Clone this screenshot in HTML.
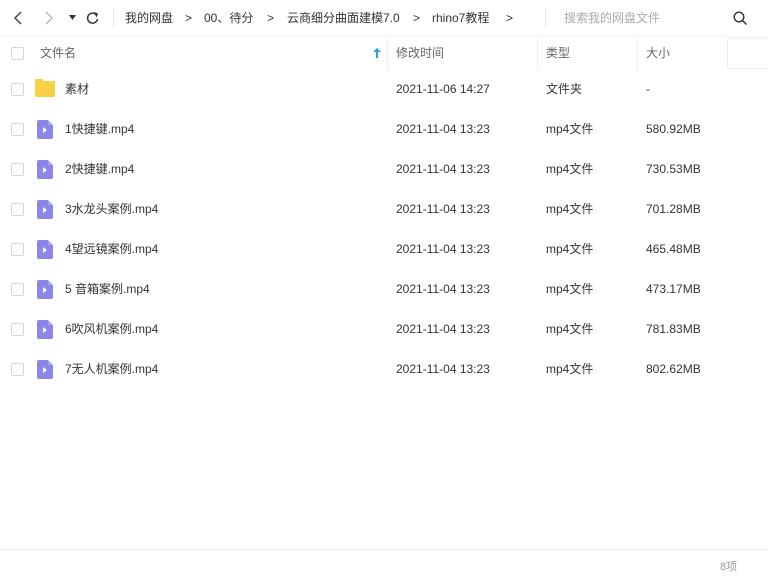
<!DOCTYPE html>
<html><head><meta charset="utf-8"><style>
*{margin:0;padding:0;box-sizing:border-box}
body{width:768px;height:583px;background:#fff;font-family:"Liberation Sans","Noto Sans CJK SC",sans-serif;font-size:12px;color:#333;position:relative;overflow:hidden}
.a{position:absolute;white-space:nowrap;line-height:16px}
.cb{position:absolute;left:11px;width:13px;height:13px;border:1px solid #d6d6d6;border-radius:2px;background:#fff}
.sep{position:absolute;top:38px;height:32px;width:1px;background:#eee}
.vid{position:absolute;left:37px;width:16px;height:19px;background:#8b86e8;border-radius:2px}
.vid:after{content:"";position:absolute;left:6px;top:7px;border-left:4px solid #fff;border-top:3px solid transparent;border-bottom:3px solid transparent}
.vid:before{content:"";position:absolute;right:0;top:0;border-top:5px solid #fff;border-left:5px solid #aaa6f0}
</style></head><body>
<svg class="a" style="left:12px;top:10px" width="14" height="16"><path d="M9 2 L3 8 L9 14" stroke="#444" stroke-width="1.5" fill="none"/></svg>
<svg class="a" style="left:42px;top:10px" width="14" height="16"><path d="M4 2 L10 8 L4 14" stroke="#bbb" stroke-width="1.5" fill="none"/></svg>
<svg class="a" style="left:69px;top:15px" width="8" height="6"><path d="M0 0 L7 0 L3.5 5Z" fill="#333"/></svg>
<svg class="a" style="left:86px;top:10px" width="14" height="16"><path d="M11.5 9 A5 5 0 1 1 10 4.5" stroke="#333" stroke-width="1.5" fill="none"/><path d="M8 2 L12 3.5 L10.5 7.5Z" fill="#333"/></svg>
<div class="a" style="left:113px;top:9px;width:1px;height:18px;background:#e5e5e5"></div>
<div class="a" style="left:125px;top:10px">我的网盘</div>
<div class="a" style="left:185px;top:10px">&gt;</div>
<div class="a" style="left:204px;top:10px">00、待分</div>
<div class="a" style="left:267px;top:10px">&gt;</div>
<div class="a" style="left:287px;top:10px">云商细分曲面建模7.0</div>
<div class="a" style="left:413px;top:10px">&gt;</div>
<div class="a" style="left:432px;top:10px">rhino7教程</div>
<div class="a" style="left:506px;top:10px">&gt;</div>
<div class="a" style="left:545px;top:9px;width:1px;height:18px;background:#e5e5e5"></div>
<div class="a" style="left:564px;top:10px;color:#aaa">搜索我的网盘文件</div>
<svg class="a" style="left:733px;top:11px" width="15" height="15"><circle cx="6" cy="6" r="4.8" stroke="#333" stroke-width="1.4" fill="none"/><path d="M9.5 9.5 L13.5 13.5" stroke="#333" stroke-width="1.5"/></svg>
<div class="a" style="left:0;top:36px;width:768px;height:1px;background:#f3f3f3"></div>
<div class="cb" style="top:47px"></div>
<div class="a" style="left:40px;top:45px;color:#666">文件名</div>
<svg class="a" style="left:372px;top:47px" width="10" height="12"><path d="M5 1 L1 5 H4 V11 H6 V5 H9Z" fill="#2ea0d6"/></svg>
<div class="sep" style="left:387px"></div>
<div class="a" style="left:396px;top:45px;color:#666">修改时间</div>
<div class="sep" style="left:537px"></div>
<div class="a" style="left:546px;top:45px;color:#666">类型</div>
<div class="sep" style="left:637px"></div>
<div class="a" style="left:646px;top:45px;color:#666">大小</div>
<div class="a" style="left:727px;top:38px;width:41px;height:31px;border:1px solid #eee;border-right:none"></div>

<div class="cb" style="top:83px"></div>
<div class="a" style="left:35px;top:81px;width:20px;height:16px;background:#f7d144;border-radius:1px"></div>
<div class="a" style="left:35px;top:79px;width:8px;height:4px;background:#f7d144"></div>
<div class="a" style="left:65px;top:81px">素材</div>
<div class="a" style="left:396px;top:81px">2021-11-06 14:27</div>
<div class="a" style="left:546px;top:81px">文件夹</div>
<div class="a" style="left:646px;top:81px">-</div>

<div class="cb" style="top:123px"></div><div class="vid" style="top:120px"></div>
<div class="a" style="left:65px;top:121px">1快捷键.mp4</div><div class="a" style="left:396px;top:121px">2021-11-04 13:23</div><div class="a" style="left:546px;top:121px">mp4文件</div><div class="a" style="left:646px;top:121px">580.92MB</div>
<div class="cb" style="top:163px"></div><div class="vid" style="top:160px"></div>
<div class="a" style="left:65px;top:161px">2快捷键.mp4</div><div class="a" style="left:396px;top:161px">2021-11-04 13:23</div><div class="a" style="left:546px;top:161px">mp4文件</div><div class="a" style="left:646px;top:161px">730.53MB</div>
<div class="cb" style="top:203px"></div><div class="vid" style="top:200px"></div>
<div class="a" style="left:65px;top:201px">3水龙头案例.mp4</div><div class="a" style="left:396px;top:201px">2021-11-04 13:23</div><div class="a" style="left:546px;top:201px">mp4文件</div><div class="a" style="left:646px;top:201px">701.28MB</div>
<div class="cb" style="top:243px"></div><div class="vid" style="top:240px"></div>
<div class="a" style="left:65px;top:241px">4望远镜案例.mp4</div><div class="a" style="left:396px;top:241px">2021-11-04 13:23</div><div class="a" style="left:546px;top:241px">mp4文件</div><div class="a" style="left:646px;top:241px">465.48MB</div>
<div class="cb" style="top:283px"></div><div class="vid" style="top:280px"></div>
<div class="a" style="left:65px;top:281px">5 音箱案例.mp4</div><div class="a" style="left:396px;top:281px">2021-11-04 13:23</div><div class="a" style="left:546px;top:281px">mp4文件</div><div class="a" style="left:646px;top:281px">473.17MB</div>
<div class="cb" style="top:323px"></div><div class="vid" style="top:320px"></div>
<div class="a" style="left:65px;top:321px">6吹风机案例.mp4</div><div class="a" style="left:396px;top:321px">2021-11-04 13:23</div><div class="a" style="left:546px;top:321px">mp4文件</div><div class="a" style="left:646px;top:321px">781.83MB</div>
<div class="cb" style="top:363px"></div><div class="vid" style="top:360px"></div>
<div class="a" style="left:65px;top:361px">7无人机案例.mp4</div><div class="a" style="left:396px;top:361px">2021-11-04 13:23</div><div class="a" style="left:546px;top:361px">mp4文件</div><div class="a" style="left:646px;top:361px">802.62MB</div>

<div class="a" style="left:0;top:549px;width:768px;height:1px;background:#eee"></div>
<div class="a" style="left:720px;top:559px;color:#999;font-size:11px">8项</div>
</body></html>
